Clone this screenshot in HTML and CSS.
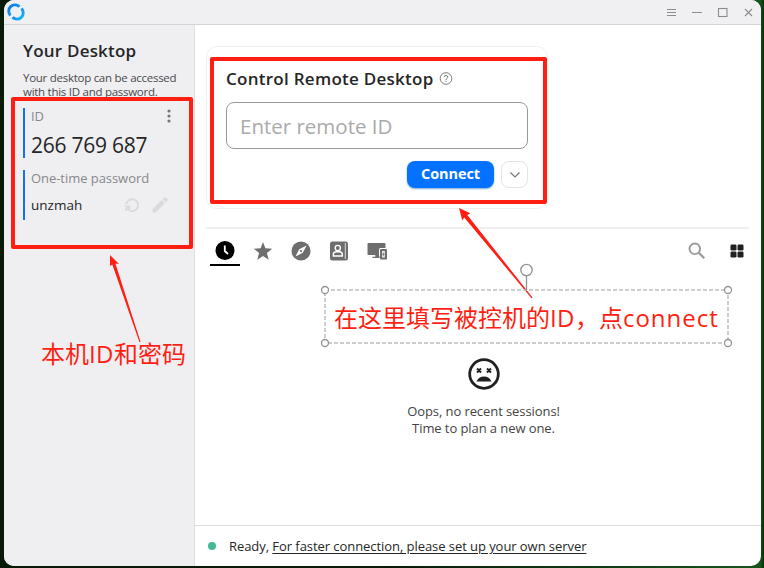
FILE: index.html
```html
<!DOCTYPE html>
<html lang="en">
<head>
<meta charset="utf-8">
<title>RustDesk</title>
<link rel="stylesheet" href="styles.css">
</head>
<body>
<div class="window">
  <header class="titlebar">
    <svg class="logo" viewBox="0 0 18 18" width="18" height="18">
      <defs><linearGradient id="g" x1="0" y1="0" x2="1" y2="1"><stop offset="0" stop-color="#0d70ec"/><stop offset="1" stop-color="#16bdf2"/></linearGradient></defs>
      <g fill="none" stroke="url(#g)" stroke-width="2.900"><path d="M3.500 12.500A6.200 6.200 0 0 1 12.500 3.800"/><path d="M14.500 5.500A6.200 6.200 0 0 1 5.500 14.200"/></g>
    </svg>
    <div class="controls">
      <svg viewBox="0 0 88 12" width="88" height="12" fill="none" stroke="#8c8c8e" stroke-width="1.1">
        <path d="M1 3.500H10M1 6.500H10M1 9.500H10M26 6.500H36"/><rect x="52.500" y="2.500" width="8.500" height="8"/><path d="M79 3L86 10M86 3L79 10"/>
      </svg>
    </div>
  </header>
  <div class="body">
    <aside class="sidebar">
      <h1 class="side-title"><span>Your Desktop</span></h1>
      <p class="side-text">Your desktop can be accessed<br>with this ID and password.</p>
      <section class="field">
        <div class="label-row"><span class="label id-label">ID</span>
          <svg viewBox="0 0 6 14" width="6" height="14" fill="#77777a"><circle cx="3" cy="2" r="1.600"/><circle cx="3" cy="7" r="1.600"/><circle cx="3" cy="12" r="1.600"/></svg>
        </div>
        <div class="number">266 769 687</div>
      </section>
      <section class="field">
        <div class="label-row"><span class="label">One-time password</span></div>
        <div class="password-row"><span class="password">unzmah</span>
          <svg viewBox="0 0 46 18" width="46" height="18">
            <path d="M3.200 8.500A6 6 0 1 1 6 14.300" fill="none" stroke="#dadadd" stroke-width="1.900"/><path d="M1 9.800H7.200V15.500L5.300 13.400 3 15.200 1.500 13.700 3.600 11.700Z" fill="#dadadd"/>
            <path d="M29.500 16.500V13.300L38.700 4.100 41.900 7.300 32.700 16.500ZM39.600 3.200L41.200 1.600Q42 1 42.800 1.600L44.400 3.200Q45 4 44.400 4.800L42.800 6.400Z" fill="#dadadd"/>
          </svg>
        </div>
      </section>
    </aside>
    <main class="main">
      <section class="card">
        <h2 class="card-title"><span>Control Remote Desktop</span>
          <svg viewBox="0 0 14 14" width="14" height="14" fill="none" stroke="#7d7d7d"><circle cx="7" cy="7.500" r="5.800"/><path d="M5.200 6.100Q5.200 4.500 7 4.500T8.800 6.100Q8.800 6.900 7.900 7.400T7 8.800M7 9.800V10.900"/></svg>
        </h2>
        <div class="input">Enter remote ID</div>
        <div class="actions">
          <div class="connect">Connect</div>
          <div class="more"><svg viewBox="0 0 12 8" width="12" height="8" fill="none" stroke="#777" stroke-width="1.200"><path d="M1.500 1.500L6 6 10.500 1.500"/></svg></div>
        </div>
      </section>
      <nav class="tabs">
        <div class="tab active"><svg viewBox="0 0 20 20" width="20" height="20"><circle cx="10" cy="9.500" r="9.500"/><path d="M9.800 4.500V10L13 13" fill="none" stroke="#fff" stroke-width="1.800"/></svg></div>
        <div class="tab"><svg viewBox="0 0 20 20" width="20" height="20"><path d="M10 1L12.400 7.300 19.200 7.700 13.900 12 15.700 18.700 10 14.900 4.300 18.700 6.100 12 .8 7.700 7.600 7.300Z"/></svg></div>
        <div class="tab"><svg viewBox="0 0 20 20" width="20" height="20"><circle cx="10" cy="10" r="9.500"/><path d="M15.600 4.400L11.800 11.800 4.400 15.600 8.200 8.200Z" fill="#fff"/><circle cx="10" cy="10" r="1.100"/></svg></div>
        <div class="tab"><svg viewBox="0 0 20 20" width="20" height="20"><rect x="1" y=".5" width="18" height="19" rx="2.500"/><path d="M16.300 2V18" stroke="#ddd"/><g fill="none" stroke="#fff" stroke-width="1.400"><circle cx="8.800" cy="7" r="2.600"/><path d="M4.300 15V13.700Q4.300 10.800 7.200 10.800H10.400Q13.300 10.800 13.300 13.700V15Z"/></g></svg></div>
        <div class="tab"><svg viewBox="0 0 20 20" width="20" height="20"><path d="M1.500 2H17.500Q18.500 2 18.500 3V7H13.500Q12 7 12 8.500V15H12.500V17H5.500V15.700H8.300V14H1.500Q.5 14 .5 13V3Q.5 2 1.500 2Z"/><path fill-rule="evenodd" d="M14 8H19Q20 8 20 9V17.500Q20 18.500 19 18.500H14Q13 18.500 13 17.500V9Q13 8 14 8ZM15.200 10V16.500H17.800V10Z"/><path d="M16.800 10.500L15.200 13.700H16.300L16.100 16 17.800 12.800H16.600Z"/></svg></div>
        <div class="tools">
          <svg viewBox="0 0 18 18" width="18" height="18" fill="none" stroke="#9b9b9b"><circle cx="6.800" cy="6.800" r="5.300" stroke-width="1.900"/><path d="M10.700 10.700L16.300 16.300" stroke-width="2.300"/></svg>
          <svg viewBox="0 0 14 14" width="14" height="14" fill="#202020"><rect x=".5" y=".5" width="6" height="6" rx="1.300"/><rect x="7.500" y=".5" width="6" height="6" rx="1.300"/><rect x=".5" y="7.500" width="6" height="6" rx="1.300"/><rect x="7.500" y="7.500" width="6" height="6" rx="1.300"/></svg>
        </div>
      </nav>
      <section class="empty">
        <svg viewBox="0 0 32 32" width="32" height="32"><circle cx="16" cy="16" r="14.300" fill="none" stroke="#202020" stroke-width="2.800"/><path d="M9 10.500L13 14.500M13 10.500L9 14.500M19 10.500L23 14.500M23 10.500L19 14.500" stroke="#202020" stroke-width="2"/><path d="M8.500 23.500Q10.700 18.500 16 18.500T23.500 23.500Z" fill="#202020"/></svg>
        <p class="line-one">Oops, no recent sessions!</p>
        <p class="line-two">Time to plan a new one.</p>
      </section>
      <footer class="status"><i class="dot"></i><span class="status-text">Ready, <u>For faster connection, please set up your own server</u></span></footer>
    </main>
  </div>
</div>
<div class="outline outline-id"></div>
<div class="outline outline-remote"></div>
<svg class="marks" viewBox="0 0 764 568" width="764" height="568">
  <g fill="#ff1f12"><path d="M110 255L119 264 115.400 263.500 140.600 342 139.400 342 112.300 264.500 110 266Z"/><path d="M459 208L470.300 213.300 467.300 215 532.500 297.500 531.500 298.200 464.200 217.500 462.300 220.500Z"/></g>
  <rect x="325" y="290" width="403" height="53" fill="none" stroke="#bdbdbd" stroke-width="1.500" stroke-dasharray="4 2"/>
  <g fill="#fff" stroke="#929292" stroke-width="1.300"><path d="M526.500 276V290"/><circle cx="526.500" cy="270" r="5.700"/><circle cx="325" cy="290" r="3.500"/><circle cx="728" cy="290" r="3.500"/><circle cx="325" cy="343" r="3.500"/><circle cx="728" cy="343" r="3.500"/></g>
</svg>
<div class="note note-id">本机<span class="wide-id">ID</span>和密码</div>
<div class="note note-remote">在这里填写被控机的<span class="wide-id">ID</span>，点<span class="wide">connect</span></div>
</body>
</html>
```
FILE: styles.css
```css
* { box-sizing: border-box; }
body { margin: 0; width: 764px; height: 568px; overflow: hidden; position: relative; padding: 0 3px 2px 4px;
  background: linear-gradient(90deg, #071907 0 50%, #17551b 99.500%, #082e0b);
  font-family: "Open Sans", "Noto Sans CJK SC", sans-serif; color: #262626; }
h1, h2, p { margin: 0; }
svg { display: block; flex: none; }
span, .note, .number { white-space: nowrap; }
.window { height: 566px; border-radius: 10px; overflow: hidden; background: #fff; display: flex; flex-direction: column; }
.titlebar { height: 25px; flex: none; border-bottom: 1px solid #d4d4d6; background: #f0f0f2; display: flex; justify-content: space-between; align-items: center; padding: 0 7px 1px 3px; }
.body { flex: 1; display: flex; min-height: 0; }
.sidebar { width: 191px; flex: none; background: #efeff2; border-right: 1px solid #dfdfe1; padding: 14px 12px 0 19px; }
.side-title { font-size: 17px; line-height: 24px; font-weight: 600; letter-spacing: .2px; }
.side-text { margin-top: 8px; font-size: 11.500px; line-height: 14px; color: #4a4a4c; letter-spacing: -.27px; white-space: nowrap; }
.field { height: 50px; margin-top: 9px; border-left: 2px solid #176ff0; padding-left: 6px; }
.field + .field { margin-top: 12px; }
.label-row { display: flex; justify-content: space-between; height: 16px; align-items: center; padding-right: 10px; }
.label { font-size: 13px; line-height: 18px; color: #88888b; letter-spacing: -.05px; }
.number { font-size: 21px; line-height: 28px; margin-top: 7px; letter-spacing: -.25px; }
.password-row { display: flex; justify-content: space-between; align-items: center; height: 18px; margin-top: 10px; padding-right: 13px; }
.password { font-size: 13.500px; }
.main { flex: 1; min-width: 0; display: flex; flex-direction: column; }
.card { width: 342px; height: 163px; margin: 21px 0 0 11px; border: 1px solid #f0f0f0; border-radius: 11px; padding: 19px 19px 0 19px; flex: none; }
.card-title { display: flex; align-items: center; gap: 5px; height: 24px; font-size: 17px; font-weight: 600; letter-spacing: .27px; }
.input { height: 47px; margin-top: 12px; border: 1px solid #999; border-radius: 8px; padding-left: 13px; font-size: 20.500px; line-height: 47px; color: #aaa; }
.actions { display: flex; justify-content: flex-end; gap: 7px; margin-top: 12px; }
.connect { width: 87px; height: 27px; border-radius: 8px; background: #0571ff; color: #fff; font-size: 14.500px; line-height: 26px; text-align: center; font-weight: 700; letter-spacing: -.1px; box-shadow: 0 1px 2px #7ca9d1; }
.more { width: 27px; height: 27px; border: 1px solid #e2e2e8; border-radius: 8px; display: grid; place-items: center; }
.tabs { height: 39px; flex: none; margin: 18px 12px 0 11px; border-top: 2px solid #efefef; padding: 0 5px 0 4px; display: flex; gap: 8px; fill: #6e6e6e; }
.tab { width: 30px; height: 37px; padding: 12px 5px 0; }
.active { border-bottom: 2px solid #000; fill: #000; }
.tools { margin-left: auto; display: flex; align-items: center; gap: 24px; padding-top: 6px; }
.empty { margin: 92px 0 0 11px; display: flex; flex-direction: column; align-items: center; font-size: 13px; line-height: 17px; letter-spacing: -.08px; color: #444; }
.line-one { margin-top: 13px; }
.status { margin-top: auto; height: 41px; border-top: 1px solid #dedede; display: flex; align-items: center; padding-left: 13px; gap: 13px; font-size: 13px; letter-spacing: -.06px; }
.dot { width: 8px; height: 8px; border-radius: 50%; background: #42b995; }
u { text-underline-offset: 2px; }
.outline { position: absolute; border: 4px solid #ff1f12; border-radius: 2px; }
.outline-id { left: 11px; top: 97px; width: 182px; height: 152px; }
.outline-remote { left: 210px; top: 57px; width: 337px; height: 147px; }
.marks { position: absolute; left: 0; top: 0; }
.note { position: absolute; color: #ff1f12; font-size: 24px; line-height: 32px; }
.note-id { left: 41px; top: 338px; }
.note-remote { left: 334px; top: 302px; }
.wide-id { letter-spacing: .4px; }
.wide { letter-spacing: 1px; }
```
